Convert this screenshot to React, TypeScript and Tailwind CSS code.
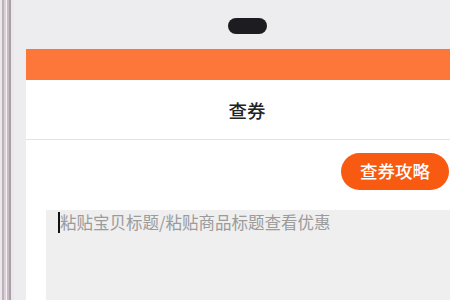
import React from 'react';

const cjk = { fontFamily: '"Noto Sans CJK SC", "Noto Sans", sans-serif' };

export default function App() {
  return (
    <div className="flex h-[300px] w-[450px] overflow-hidden bg-[#ededef]" style={cjk}>
      {/* phone frame edge */}
      <div className="flex h-full w-[14px] shrink-0">
        <div className="w-[2px] bg-[#ebe7ea]" />
        <div className="w-[2px] bg-[#bdb0b9]" />
        <div className="w-[2px] bg-[#ddd2d9]" />
        <div className="w-[1px] bg-[#f3f0f2]" />
        <div className="w-[2px] bg-[#c9bcc5]" />
        <div className="w-[2px] bg-[#ab9ea8]" />
        <div className="w-[3px] bg-[#ebe8eb]" />
      </div>

      <div className="flex min-w-0 flex-1 flex-col">
        {/* top bezel */}
        <div className="flex h-[49px] shrink-0 items-start pl-[214px] pt-[18px]">
          <div className="h-[16px] w-[39px] rounded-full bg-[#1d1d21]" />
        </div>

        {/* screen */}
        <div className="ml-[12px] flex w-[442px] flex-1 flex-col bg-white">
          <div className="h-[31px] shrink-0 bg-[#fd763a]" />
          <div className="flex h-[60px] shrink-0 items-center justify-center border-b border-[#e3e3e3] pt-[3px] text-[18.5px] font-medium text-[#222]">
            查券
          </div>
          <div className="flex justify-end pr-[19px] pt-[13px]">
            <button className="flex h-[37px] w-[108px] items-center justify-center rounded-full bg-[#f85a12] text-[17.5px] font-medium text-white">
              查券攻略
            </button>
          </div>
          <div className="ml-[20px] mt-[20px] flex flex-1 items-start bg-[#efefef] pl-[12px] pt-[1px]">
            <div className="mt-[1px] h-[21px] w-[2px] bg-[#111]" />
            <span className="text-[16.5px] leading-[22px] text-[#9b9b9b]">粘贴宝贝标题/粘贴商品标题查看优惠</span>
          </div>
        </div>
      </div>
    </div>
  );
}
